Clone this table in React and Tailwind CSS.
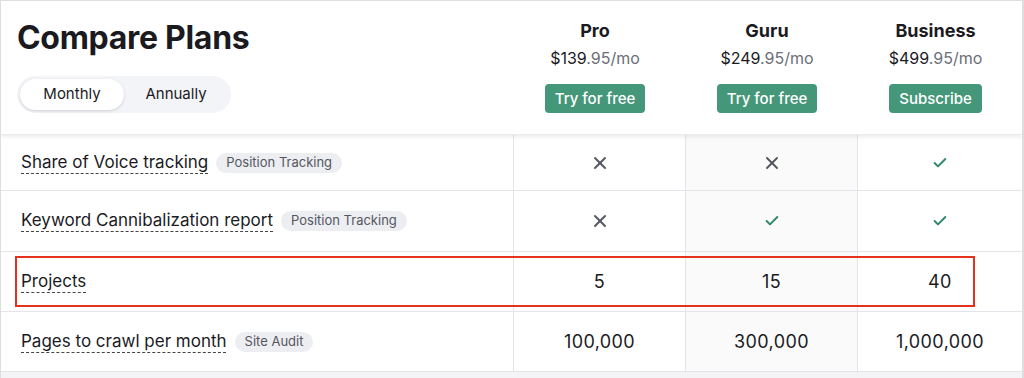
import React from 'react';
import { Check, X } from 'lucide-react';

const PLANS = [
    { name: 'Pro', price: '$139', cta: 'Try for free' },
    { name: 'Guru', price: '$249', cta: 'Try for free' },
    { name: 'Business', price: '$499', cta: 'Subscribe' },
];

const ROWS = [
    { label: 'Share of Voice tracking', tag: 'Position Tracking', values: [false, false, true], h: 'h-[56px]' },
    { label: 'Keyword Cannibalization report', tag: 'Position Tracking', values: [false, true, true], h: 'h-[61px]' },
    { label: 'Projects', values: ['5', '15', '40'], h: 'h-[60px]', highlight: true },
    { label: 'Pages to crawl per month', tag: 'Site Audit', values: ['100,000', '300,000', '1,000,000'], h: 'h-[60px]' },
];

const Cell = ({ value, idx }) => (
    <div className={`flex items-center justify-center border-l border-[#e4e4ea] ${idx === 1 ? 'bg-[#fafafa]' : 'bg-white'}`}>
        {value === true && <Check size={16} strokeWidth={3} className="text-[#2f8a67]" />}
        {value === false && <X size={20} strokeWidth={2.3} className="text-[#55575d]" />}
        {typeof value === 'string' && <span className="text-[18px] tracking-[0.4px] text-[#1b1b1f]">{value}</span>}
    </div>
);

export default function App() {
    return (
        <div className="w-[1024px] h-[378px] overflow-hidden bg-white border-t border-l border-r-2 border-[#dedede] font-['Inter',sans-serif] text-[#1b1b1f]">
            {/* Header */}
            <div className="relative z-10 grid grid-cols-[512px_172px_172px_1fr] h-[134px] bg-white shadow-[0_2px_4px_rgba(0,0,0,0.08)] border-b border-[#ececec]">
                <div className="pl-4 pt-[17px]">
                    <h1 className="text-[32px] font-bold tracking-[-0.3px] leading-[40px]">Compare Plans</h1>
                    <div className="mt-[18px] inline-flex p-[3px] rounded-full bg-[#f3f4f8]">
                        <span className="w-[104px] h-[31px] flex items-center justify-center rounded-full bg-white shadow-[0_1px_3px_rgba(0,0,0,0.15)] text-[15px]">Monthly</span>
                        <span className="w-[104px] h-[31px] flex items-center justify-center text-[15px]">Annually</span>
                    </div>
                </div>
                {PLANS.map(p => (
                    <div key={p.name} className="flex flex-col items-center pt-[19px] pr-[8px]">
                        <div className="text-[18px] font-bold leading-[22px]">{p.name}</div>
                        <div className="mt-[6px] text-[16px] leading-[20px]">
                            {p.price}<span className="text-[#6c6e79]">.95/mo</span>
                        </div>
                        <button className="mt-[16px] h-[29px] px-[10px] rounded-[4px] bg-[#45977a] text-white text-[15px] font-medium leading-none">
                            {p.cta}
                        </button>
                    </div>
                ))}
            </div>

            {/* Rows */}
            {ROWS.map(row => (
                <div key={row.label} className={`relative grid grid-cols-[512px_172px_172px_1fr] ${row.h} border-b border-[#e4e4ea]`}>
                    <div className="flex items-center pl-[20px] gap-2">
                        <span className="text-[17px] underline decoration-dashed decoration-[#444] decoration-1 underline-offset-[5px]">{row.label}</span>
                        {row.tag && (
                            <span className="px-[10px] h-[20px] flex items-center rounded-full bg-[#eceef2] text-[13px] text-[#55575e]">{row.tag}</span>
                        )}
                    </div>
                    {row.values.map((v, i) => <Cell key={i} value={v} idx={i} />)}
                    {row.highlight && (
                        <div className="absolute left-[14px] top-[4px] w-[960px] h-[51px] border-2 border-[#e5321d] pointer-events-none" />
                    )}
                </div>
            ))}
            <div className="h-[10px] bg-[#f4f4f6]" />
        </div>
    );
}
